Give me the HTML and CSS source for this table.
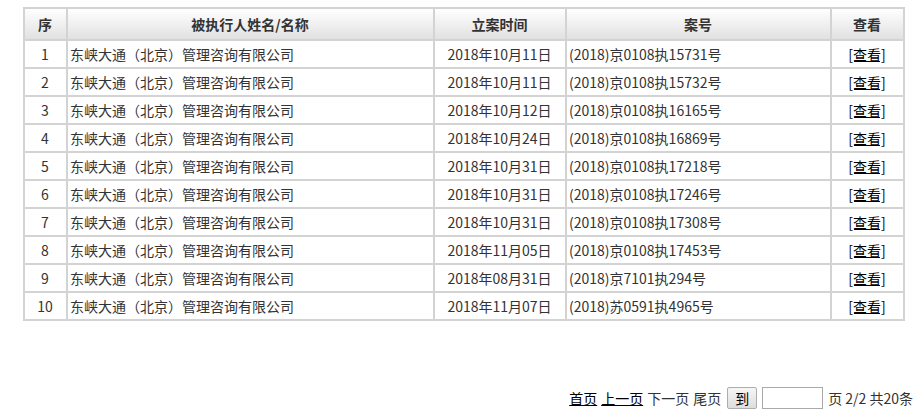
FILE: index.html
```html
<!DOCTYPE html>
<html lang="zh-CN">
<head>
<meta charset="utf-8">
<title>被执行人</title>
<link rel="stylesheet" href="styles.css">
</head>
<body>
<div class="wrap">
<table class="list">
<thead>
<tr><th class="c1">序</th><th class="c2">被执行人姓名/名称</th><th class="c3">立案时间</th><th class="c4">案号</th><th class="c5">查看</th></tr>
</thead>
<tbody>
<tr><td class="num">1</td><td>东峡大通（北京）管理咨询有限公司</td><td class="ctr">2018年10月11日</td><td>(2018)京0108执15731号</td><td class="ctr"><a href="#">[查看]</a></td></tr>
<tr><td class="num">2</td><td>东峡大通（北京）管理咨询有限公司</td><td class="ctr">2018年10月11日</td><td>(2018)京0108执15732号</td><td class="ctr"><a href="#">[查看]</a></td></tr>
<tr><td class="num">3</td><td>东峡大通（北京）管理咨询有限公司</td><td class="ctr">2018年10月12日</td><td>(2018)京0108执16165号</td><td class="ctr"><a href="#">[查看]</a></td></tr>
<tr><td class="num">4</td><td>东峡大通（北京）管理咨询有限公司</td><td class="ctr">2018年10月24日</td><td>(2018)京0108执16869号</td><td class="ctr"><a href="#">[查看]</a></td></tr>
<tr><td class="num">5</td><td>东峡大通（北京）管理咨询有限公司</td><td class="ctr">2018年10月31日</td><td>(2018)京0108执17218号</td><td class="ctr"><a href="#">[查看]</a></td></tr>
<tr><td class="num">6</td><td>东峡大通（北京）管理咨询有限公司</td><td class="ctr">2018年10月31日</td><td>(2018)京0108执17246号</td><td class="ctr"><a href="#">[查看]</a></td></tr>
<tr><td class="num">7</td><td>东峡大通（北京）管理咨询有限公司</td><td class="ctr">2018年10月31日</td><td>(2018)京0108执17308号</td><td class="ctr"><a href="#">[查看]</a></td></tr>
<tr><td class="num">8</td><td>东峡大通（北京）管理咨询有限公司</td><td class="ctr">2018年11月05日</td><td>(2018)京0108执17453号</td><td class="ctr"><a href="#">[查看]</a></td></tr>
<tr><td class="num">9</td><td>东峡大通（北京）管理咨询有限公司</td><td class="ctr">2018年08月31日</td><td>(2018)京7101执294号</td><td class="ctr"><a href="#">[查看]</a></td></tr>
<tr><td class="num">10</td><td>东峡大通（北京）管理咨询有限公司</td><td class="ctr">2018年11月07日</td><td>(2018)苏0591执4965号</td><td class="ctr"><a href="#">[查看]</a></td></tr>
</tbody>
</table>
<div class="pager">
<a href="#">首页</a> <a href="#">上一页</a><span>下一页</span><span>尾页</span><button class="go" type="button">到</button><input class="pg" type="text"><span>页 2/2 共20条</span>
</div>
</div>
</body>
</html>
```
FILE: styles.css
```css
html, body {
  margin: 0;
  padding: 0;
  background: #fff;
}
body {
  font-family: "Noto Sans CJK SC", "Microsoft YaHei", sans-serif;
  font-size: 14px;
  color: #333;
}
.wrap {
  padding: 7px 18px 0 23px;
}
.list {
  width: 882px;
  border-collapse: collapse;
  table-layout: fixed;
}
.list th, .list td {
  border: 2px solid #d3d3d3;
  padding: 0 3px 0 2px;
  white-space: nowrap;
  overflow: hidden;
  line-height: 18px;
}
.list th {
  height: 30px;
  font-weight: bold;
  color: #333;
  background: linear-gradient(#ffffff, #e1e1e1);
  text-align: center;
}
.list tbody td { height: 26px; }
.c1 { width: 36px; }
.c2 { width: 360px; }
.c3 { width: 125px; }
.c4 { width: 258px; }
.c5 { width: 66px; }
.num, .ctr { text-align: center; }
.list a {
  color: #000;
  text-decoration: underline;
}
.pager {
  margin-top: 66px;
  margin-right: -8px;
  display: flex;
  justify-content: flex-end;
  align-items: center;
  gap: 4px;
  color: #333;
  line-height: 18px;
}
.pager a {
  color: #000;
  text-decoration: underline;
}
.go {
  font-family: inherit;
  font-size: 14px;
  width: 30px;
  height: 22px;
  padding: 0;
  border: 1px solid #adadad;
  border-radius: 2px;
  background: linear-gradient(#f6f6f6, #dddddd);
  color: #000;
  margin-left: 2px;
}
.pg {
  width: 57px;
  height: 18px;
  border: 1px solid #a9a9a9;
  padding: 1px 1px;
  margin: 0 1px;
}
```
